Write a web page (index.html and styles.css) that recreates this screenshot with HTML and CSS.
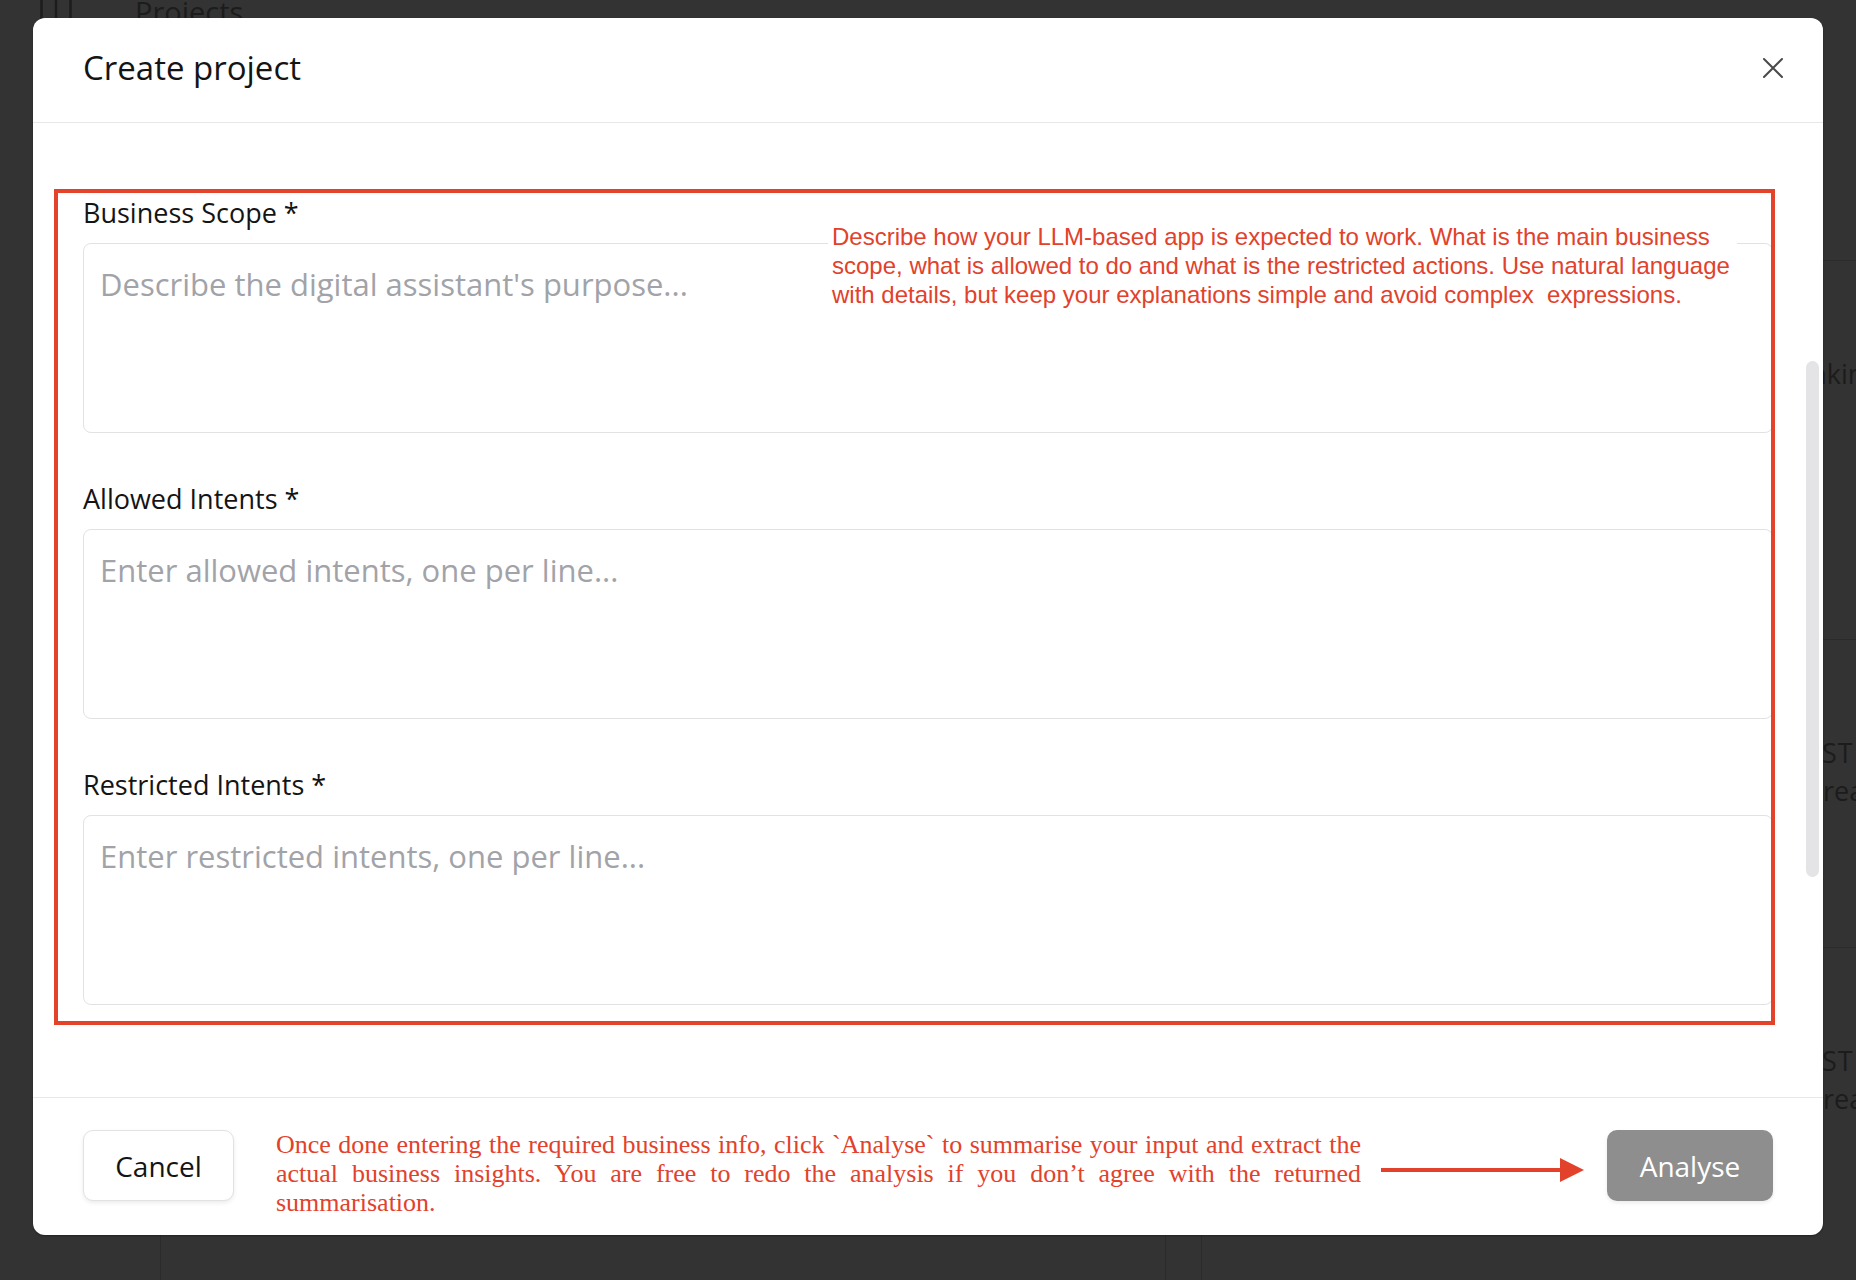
FILE: index.html
```html
<!DOCTYPE html>
<html lang="en">
<head>
<meta charset="utf-8">
<title>Create project</title>
<link rel="stylesheet" href="styles.css">
</head>
<body>
  <div class="bg-page" aria-hidden="true">
    <div class="bg-topbar">
      <svg class="bg-icon" viewBox="0 0 32 32" width="32" height="32">
        <rect x="1.5" y="-8" width="29" height="38" rx="3" fill="none" stroke="#1d1d1d" stroke-width="2.5"/>
        <line x1="16" y1="-8" x2="16" y2="30" stroke="#1d1d1d" stroke-width="2.5"/>
      </svg>
      <span class="bg-title">Projects</span>
    </div>
    <div class="bg-grid">
      <div class="bg-card bg-card-l1"></div>
      <div class="bg-card bg-card-r1"><span class="bg-cell bg-cell-a">Thinking</span></div>
      <div class="bg-card bg-card-l2"></div>
      <div class="bg-card bg-card-r2">
        <div class="bg-cell bg-cell-b"><span class="bg-strong">ESTIMATE</span><span>Created</span></div>
      </div>
      <div class="bg-card bg-card-l3"></div>
      <div class="bg-card bg-card-r3">
        <div class="bg-cell bg-cell-b"><span class="bg-strong">ESTIMATE</span><span>Created</span></div>
      </div>
    </div>
  </div>

  <div class="modal" role="dialog" aria-labelledby="modal-title">
    <div class="modal-header">
      <h2 id="modal-title" class="modal-title">Create project</h2>
      <button class="close-btn" aria-label="Close">
        <svg viewBox="0 0 22 22" width="22" height="22">
          <path d="M2 2 L20 20 M20 2 L2 20" stroke="#4a4a4a" stroke-width="2" stroke-linecap="round" fill="none"/>
        </svg>
      </button>
    </div>

    <div class="modal-body">
      <div class="form">
        <div class="field">
          <label class="field-label">Business Scope *</label>
          <textarea class="field-input" placeholder="Describe the digital assistant's purpose..."></textarea>
        </div>
        <div class="field">
          <label class="field-label">Allowed Intents *</label>
          <textarea class="field-input" placeholder="Enter allowed intents, one per line..."></textarea>
        </div>
        <div class="field">
          <label class="field-label">Restricted Intents *</label>
          <textarea class="field-input" placeholder="Enter restricted intents, one per line..."></textarea>
        </div>

        <div class="highlight-box"></div>
        <div class="note-top">
          <div class="note-line">Describe how your LLM-based app is expected to work. What is the main business</div>
          <div class="note-line">scope, what is allowed to do and what is the restricted actions. Use natural language</div>
          <div class="note-line">with details, but keep your explanations simple and avoid complex&nbsp; expressions.</div>
        </div>
      </div>
      <div class="scroll-thumb"></div>
    </div>

    <div class="modal-footer">
      <button class="btn btn-cancel">Cancel</button>
      <div class="footer-note">
        <div class="jline">Once done entering the required business info, click `Analyse` to summarise your input and extract the</div>
        <div class="jline">actual business insights. You are free to redo the analysis if you don’t agree with the returned</div>
        <div class="lline">summarisation.</div>
      </div>
      <svg class="arrow" viewBox="0 0 203 24" width="203" height="24">
        <rect x="0" y="10" width="182" height="4" fill="#e2412b"/>
        <polygon points="179,0 203,12 179,24" fill="#e2412b"/>
      </svg>
      <button class="btn btn-analyse">Analyse</button>
    </div>
  </div>
</body>
</html>
```

FILE: styles.css
```css
* { box-sizing: border-box; }

html, body {
  margin: 0;
  width: 1856px;
  height: 1280px;
  overflow: hidden;
  background: #333333;
}

body {
  position: relative;
  font-family: "Open Sans", "Noto Sans", sans-serif;
}

/* ---------- background page (dimmed) ---------- */
.bg-page {
  height: 1280px;
  color: #1c1c1c;
}

.bg-topbar {
  display: flex;
  align-items: flex-start;
  height: 40px;
  padding-left: 40px;
  margin-top: -8px;
}

.bg-icon { margin-top: 4px; }

.bg-title {
  margin-left: 63px;
  font-size: 29px;
  line-height: 40px;
}

.bg-grid {
  display: grid;
  grid-template-columns: 1006px 1fr;
  column-gap: 35px;
  row-gap: 0;
  margin: 228px 0 0 160px;
}

.bg-card {
  border-top: 1px solid #2b2b2b;
  border-left: 1px solid #2b2b2b;
}

.bg-card-l1, .bg-card-r1 { height: 379px; }
.bg-card-l2, .bg-card-r2 { height: 308px; }
.bg-card-l3, .bg-card-r3 { height: 333px; }

.bg-card-l3 { border-right: 1px solid #2b2b2b; }

.bg-cell {
  display: block;
  white-space: nowrap;
  font-size: 27px;
  line-height: 38px;
}

.bg-cell-a {
  padding: 94px 0 0 570px;
}

.bg-cell-b {
  display: flex;
  flex-direction: column;
  padding: 94px 0 0 604px;
}

.bg-strong { letter-spacing: 1px; }

/* ---------- modal ---------- */
.modal {
  position: absolute;
  left: 33px;
  top: 18px;
  width: 1790px;
  height: 1217px;
  background: #ffffff;
  border-radius: 12px;
  display: flex;
  flex-direction: column;
  box-shadow: 0 1px 2px rgba(0, 0, 0, 0.35);
}

.modal-header {
  flex: none;
  height: 105px;
  display: flex;
  align-items: center;
  justify-content: space-between;
  padding: 0 39px 4px 50px;
  border-bottom: 1px solid #e7e7e7;
}

.modal-title {
  margin: 0;
  font-size: 33px;
  font-weight: 500;
  line-height: 42px;
  color: #141414;
}

.close-btn {
  border: 0;
  background: none;
  padding: 0;
  width: 22px;
  height: 22px;
  display: flex;
  cursor: pointer;
}

.modal-body {
  flex: 1;
  position: relative;
  padding: 72px 50px 0;
}

.form {
  position: relative;
  display: flex;
  flex-direction: column;
  gap: 48px;
}

.field {
  display: flex;
  flex-direction: column;
}

.field-label {
  font-size: 27px;
  line-height: 36px;
  color: #141414;
  margin-bottom: 12px;
}

.field-input {
  display: block;
  width: 100%;
  height: 190px;
  border: 1px solid #e2e2e4;
  border-radius: 8px;
  padding: 21px 16px;
  font-family: inherit;
  font-size: 31px;
  line-height: 38px;
  color: #141414;
  resize: none;
  outline: none;
  background: #fff;
}

.field-input::placeholder {
  color: #a2a3a8;
}

.highlight-box {
  position: absolute;
  top: -6px;
  left: -29px;
  right: -2px;
  bottom: -20px;
  border: 4px solid #e4432b;
  pointer-events: none;
}

.note-top {
  position: absolute;
  left: 745px;
  top: 27px;
  width: 909px;
  padding-left: 4px;
  background: #ffffff;
  font-family: "Liberation Sans", Arial, sans-serif;
  font-size: 24px;
  line-height: 29px;
  color: #e2412b;
}

.note-line { white-space: nowrap; }

.scroll-thumb {
  position: absolute;
  left: 1773px;
  top: 238px;
  width: 13px;
  height: 516px;
  border-radius: 7px;
  background: #e4e4e6;
}

/* ---------- footer ---------- */
.modal-footer {
  flex: none;
  height: 138px;
  display: flex;
  align-items: flex-start;
  padding: 32px 50px 0;
  border-top: 1px solid #e7e7e7;
}

.btn {
  flex: none;
  height: 71px;
  border-radius: 10px;
  font-family: inherit;
  font-size: 28px;
  cursor: pointer;
}

.btn-cancel {
  width: 151px;
  border: 1px solid #e2e2e4;
  background: #ffffff;
  color: #141414;
  box-shadow: 0 2px 4px rgba(0, 0, 0, 0.08);
}

.btn-analyse {
  width: 166px;
  margin-left: 23px;
  border: 0;
  background: #8e8e8e;
  color: #ffffff;
  box-shadow: 0 2px 4px rgba(0, 0, 0, 0.08);
}

.footer-note {
  flex: none;
  width: 1085px;
  margin-left: 42px;
  font-family: "Liberation Serif", "Times New Roman", serif;
  font-size: 26px;
  line-height: 29px;
  color: #e2412b;
}

.jline {
  text-align: justify;
  text-align-last: justify;
  white-space: nowrap;
}

.lline { text-align: left; }

.arrow {
  flex: none;
  margin-left: 20px;
  margin-top: 28px;
}
```
